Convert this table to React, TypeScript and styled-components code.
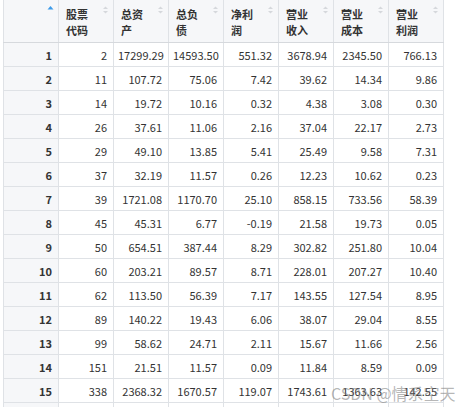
import styled, {createGlobalStyle} from 'styled-components';

const GlobalStyle = createGlobalStyle`
  html, body {
    margin: 0;
    padding: 0;
    background: #fff;
    overflow: hidden;
  }
  body {
    font-family: "Noto Sans CJK SC", "Noto Sans", sans-serif;
  }
`;

const columns = ['股票代码', '总资产', '总负债', '净利润', '营业收入', '营业成本', '营业利润'];

const rows: string[][] = [
  ['2', '17299.29', '14593.50', '551.32', '3678.94', '2345.50', '766.13'],
  ['11', '107.72', '75.06', '7.42', '39.62', '14.34', '9.86'],
  ['14', '19.72', '10.16', '0.32', '4.38', '3.08', '0.30'],
  ['26', '37.61', '11.06', '2.16', '37.04', '22.17', '2.73'],
  ['29', '49.10', '13.85', '5.41', '25.49', '9.58', '7.31'],
  ['37', '32.19', '11.57', '0.26', '12.23', '10.62', '0.23'],
  ['39', '1721.08', '1170.70', '25.10', '858.15', '733.56', '58.39'],
  ['45', '45.31', '6.77', '-0.19', '21.58', '19.73', '0.05'],
  ['50', '654.51', '387.44', '8.29', '302.82', '251.80', '10.04'],
  ['60', '203.21', '89.57', '8.71', '228.01', '207.27', '10.40'],
  ['62', '113.50', '56.39', '7.17', '143.55', '127.54', '8.95'],
  ['89', '140.22', '19.43', '6.06', '38.07', '29.04', '8.55'],
  ['99', '58.62', '24.71', '2.11', '15.67', '11.66', '2.56'],
  ['151', '21.51', '11.57', '0.09', '11.84', '8.59', '0.09'],
  ['338', '2368.32', '1670.57', '119.07', '1743.61', '1363.63', '142.55'],
  ['', '', '', '', '', '', ''],
];

export default function App() {
  return (
    <>
      <GlobalStyle />
      <Page>
        <Table>
          <colgroup>
            <col style={{width: 55}} />
            {columns.map((c) => (
              <col key={c} style={{width: 55}} />
            ))}
          </colgroup>
          <thead>
            <tr>
              <HeadCell $index>
                <SortIcon active />
              </HeadCell>
              {columns.map((c) => (
                <HeadCell key={c}>
                  {c}
                  <SortIcon />
                </HeadCell>
              ))}
            </tr>
          </thead>
          <tbody>
            {rows.map((row, i) => (
              <tr key={i}>
                <IndexCell>{row[0] === '' ? '' : i + 1}</IndexCell>
                {row.map((v, j) => (
                  <Cell key={j}>{v}</Cell>
                ))}
              </tr>
            ))}
          </tbody>
        </Table>
        <Watermark>CSDN @情系空天</Watermark>
      </Page>
    </>
  );
}

function SortIcon({active}: {active?: boolean}) {
  return (
    <SortMark width="7" height="10" viewBox="0 0 7 10">
      {active ? (
        <path d="M0.5 4.5 L3.5 1 L6.5 4.5 Z" fill="#3d9be9" />
      ) : (
        <>
          <path d="M1 4 L3.5 1.5 L6 4 Z" fill="#d5d8dc" />
          <path d="M1 6 L3.5 8.5 L6 6 Z" fill="#d5d8dc" />
        </>
      )}
    </SortMark>
  );
}

const Page = styled.div`
  position: relative;
  width: 457px;
  height: 407px;
  padding-left: 3px;
  box-sizing: border-box;
`;

const Table = styled.table`
  table-layout: fixed;
  border-collapse: collapse;
  width: 440px;
  font-size: 11px;
  color: #333;
  border-left: 1px solid #dfe2e6;
`;

const HeadCell = styled.th<{$index?: boolean}>`
  position: relative;
  height: 42px;
  box-sizing: border-box;
  padding: 6px 17px 4px 7px;
  text-align: left;
  vertical-align: top;
  font-weight: bold;
  line-height: 16px;
  background: #f6f7f9;
  border: 1px solid #dfe2e6;
  border-top: none;
  border-bottom-color: #d6d9dd;
  word-break: break-all;
`;

const SortMark = styled.svg`
  position: absolute;
  top: 5px;
  right: 4px;
`;

const Cell = styled.td`
  height: 24px;
  box-sizing: border-box;
  padding: 0 6px 0 4px;
  text-align: right;
  white-space: nowrap;
  border: 1px solid #dfe2e6;
  line-height: 22px;
`;

const IndexCell = styled(Cell)`
  font-weight: bold;
  background: #f6f7f9;
`;

const Watermark = styled.div`
  position: absolute;
  left: 331px;
  top: 381px;
  font-size: 16px;
  color: rgba(120, 120, 120, 0.55);
  white-space: nowrap;
  pointer-events: none;
`;
